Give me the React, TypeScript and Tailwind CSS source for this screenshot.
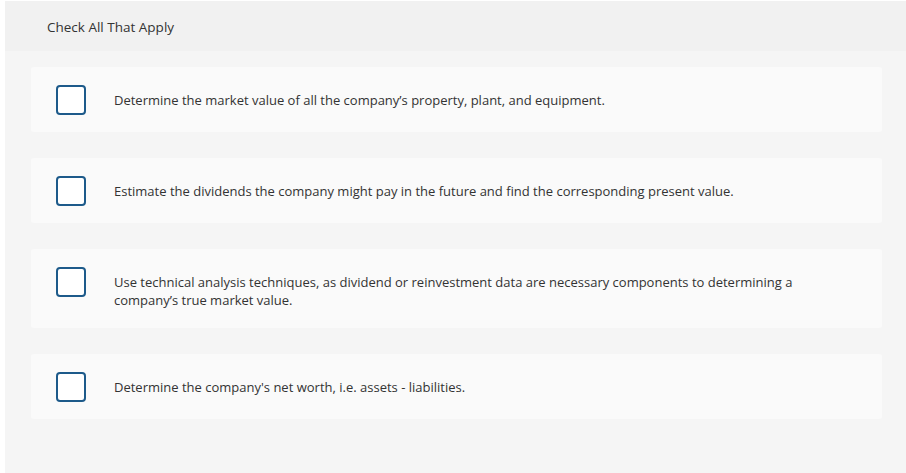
const options = [
  "Determine the market value of all the company’s property, plant, and equipment.",
  "Estimate the dividends the company might pay in the future and find the corresponding present value.",
  "Use technical analysis techniques, as dividend or reinvestment data are necessary components to determining a company’s true market value.",
  "Determine the company's net worth, i.e. assets - liabilities.",
];

export default function App() {
  return (
    <div className="h-[473px] w-[906px] bg-white pt-px pl-[5px] font-['Open_Sans','Liberation_Sans',sans-serif] text-[#333]">
      <div className="h-[50px] bg-[#f1f1f1] pl-[42px] pt-[16px] text-[13.5px]">Check All That Apply</div>
      <div className="h-[422px] bg-[#f5f5f5] pl-[26px] pr-[24px] pt-[16px]">
        <div className="flex flex-col gap-[26px]">
          {options.map((text, i) => (
            <div key={i} className="flex items-start rounded-[3px] bg-[#fafafa] pt-[18px] pb-[17px] pl-[25px] pr-[60px]">
              <div className="h-[30px] w-[30px] shrink-0 rounded-[4px] border-2 border-[#1d5a8a] bg-white"></div>
              <p className="ml-[28px] pt-[6px] pb-[2px] text-[13px] leading-[18px]">{text}</p>
            </div>
          ))}
        </div>
      </div>
    </div>
  );
}
